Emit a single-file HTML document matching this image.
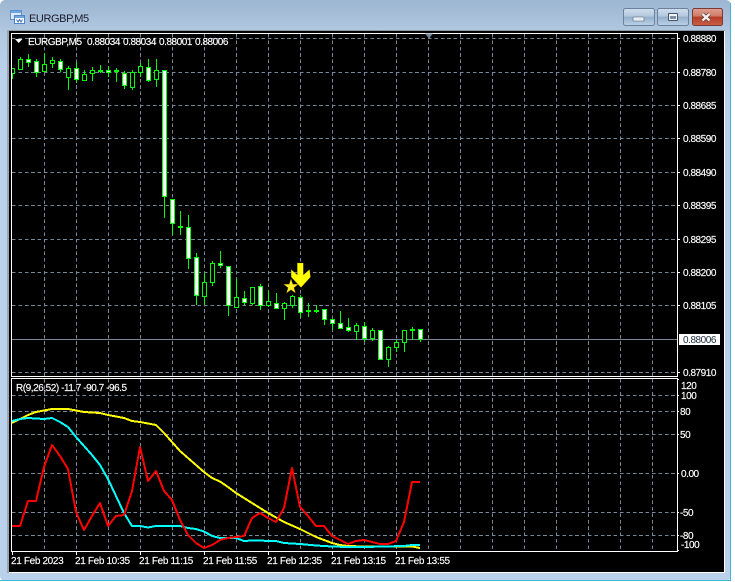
<!DOCTYPE html>
<html>
<head>
<meta charset="utf-8">
<title>EURGBP,M5</title>
<style>
html,body{margin:0;padding:0;background:#fff;width:735px;height:582px;overflow:hidden}
svg{display:block}
text{font-family:"Liberation Sans",sans-serif;font-size:10px;letter-spacing:-.45px;fill:#fff;stroke:#fff;stroke-width:.15px}
.t{letter-spacing:-.35px}
</style>
</head>
<body>
<svg width="735" height="582" viewBox="0 0 735 582" xmlns="http://www.w3.org/2000/svg">
<defs>
<linearGradient id="fr" x1="0" y1="0" x2="0" y2="1"><stop offset="0" stop-color="#9db6d1"/><stop offset=".06" stop-color="#b2c9e2"/><stop offset=".12" stop-color="#b9d1ea"/><stop offset="1" stop-color="#b9d1ea"/></linearGradient>
<linearGradient id="btn" x1="0" y1="0" x2="0" y2="1"><stop offset="0" stop-color="#d0deec"/><stop offset=".45" stop-color="#b3c8de"/><stop offset=".5" stop-color="#94afcb"/><stop offset="1" stop-color="#bcd2e8"/></linearGradient>
<linearGradient id="cls" x1="0" y1="0" x2="0" y2="1"><stop offset="0" stop-color="#e0a093"/><stop offset=".45" stop-color="#cf7a68"/><stop offset=".5" stop-color="#b63c25"/><stop offset="1" stop-color="#c9604a"/></linearGradient>
<clipPath id="mainc"><rect x="12" y="34" width="665" height="342"/></clipPath>
</defs>

<!-- window frame -->
<rect x="0" y="0" width="731" height="581" rx="5" fill="url(#fr)"/>
<rect x="0" y="580" width="731" height="1" fill="#3fb8d8"/>
<rect x="730" y="3" width="1" height="578" fill="#3fb8d8"/>

<!-- title icon -->
<g shape-rendering="crispEdges">
<rect x="10.500" y="10.500" width="11" height="9" fill="#dbe9f8" stroke="#5e93d0"/>
<rect x="11" y="11" width="10" height="2" fill="#6ea5e0"/>
<rect x="14.500" y="15.500" width="10" height="8" fill="#fff" stroke="#4d86c8"/>
<rect x="15" y="16" width="9" height="2" fill="#6ea5e0"/>
</g>
<path d="M16.500 19.500l1.500 2.500 1.500-2.500 1.500 2.500 1.500-2.500" fill="none" stroke="#3a6fb0" stroke-width="1"/>
<text x="29" y="22" style="font-size:11px;letter-spacing:-.4px;fill:#1c1c2e;stroke:none">EURGBP,M5</text>

<!-- window buttons -->
<rect x="623.500" y="8.500" width="31" height="17" rx="2" fill="url(#btn)" stroke="#6a829e"/>
<rect x="633" y="17" width="11" height="4" rx="1" fill="#e9eef4" stroke="#55677c" stroke-width=".6"/>
<rect x="657.500" y="8.500" width="31" height="17" rx="2" fill="url(#btn)" stroke="#6a829e"/>
<rect x="668" y="13" width="10" height="8" rx="1" fill="#44566c"/>
<rect x="669" y="14" width="8" height="6" fill="#f0f4f8"/>
<rect x="670" y="16" width="6" height="3" fill="#7d90a6"/>
<rect x="692.500" y="8.500" width="30" height="17" rx="2" fill="url(#cls)" stroke="#7a3a38"/>
<path d="M702.500 14l7 6.500M709.500 14l-7 6.500" stroke="#4a3a3a" stroke-width="3.600" fill="none"/>
<path d="M702.500 14l7 6.500M709.500 14l-7 6.500" stroke="#f4f0ee" stroke-width="2.400" fill="none"/>

<!-- client area -->
<rect x="7" y="30" width="718" height="543" fill="#fff"/>
<rect x="7" y="30" width="718" height="1" fill="#8f9aa6"/>
<rect x="7" y="30" width="2" height="543" fill="#9aa5b1"/>
<rect x="9" y="31" width="715" height="541" fill="#000"/>

<!-- grid -->
<g stroke="#778899" stroke-width="1" stroke-dasharray="3.600 2.800" fill="none" shape-rendering="crispEdges">
<path d="M12 38.500H677M12 72.500H677M12 105.500H677M12 138.500H677M12 172.500H677M12 205.500H677M12 239.500H677M12 272.500H677M12 305.500H677M12 372.500H677"/>
<path d="M12 395.500H677M12 411.500H677M12 434.500H677M12 473.500H677M12 512.500H677M12 535.500H677"/>
<path d="M44.500 34V376M76.500 34V376M108.500 34V376M140.500 34V376M172.500 34V376M204.500 34V376M236.500 34V376M268.500 34V376M300.500 34V376M332.500 34V376M364.500 34V376M396.500 34V376M428.500 34V376M460.500 34V376M492.500 34V376M524.500 34V376M556.500 34V376M588.500 34V376M620.500 34V376M652.500 34V376"/>
<path d="M44.500 379V551M76.500 379V551M108.500 379V551M140.500 379V551M172.500 379V551M204.500 379V551M236.500 379V551M268.500 379V551M300.500 379V551M332.500 379V551M364.500 379V551M396.500 379V551M428.500 379V551M460.500 379V551M492.500 379V551M524.500 379V551M556.500 379V551M588.500 379V551M620.500 379V551M652.500 379V551"/>
</g>
<!-- current price line -->
<path d="M12 339.500H677" stroke="#778899" stroke-width="1" shape-rendering="crispEdges"/>

<!-- candles -->
<g clip-path="url(#mainc)" shape-rendering="crispEdges">
<path stroke="#00ff00" stroke-width="1" fill="none" d="M12.500 68V79M20.500 57V70M28.500 54V67M36.500 59V77M44.500 53V72M52.500 57V68M60.500 59V72M68.500 66V90M76.500 62V83M84.500 70V80M92.500 67V81M100.500 65V73M108.500 66V77M116.500 68V82M124.500 71V89M132.500 70V90M140.500 63V77M148.500 59V82M156.500 59V87M164.500 70V218M172.500 199V235M180.500 211V235M188.500 215V269M196.500 253V305M204.500 273V305M212.500 261V286M220.500 251V268M228.500 266V316M236.500 279V307M244.500 291V305M252.500 287V305M260.500 284V310M268.500 291V307M276.500 293V309M284.500 302V320M292.500 295V308M300.500 295V318M308.500 303V317M316.500 305V313M324.500 309V325M332.500 319V330M340.500 311V328M348.500 318V332M356.500 323V340M364.500 322V342M372.500 328V341M380.500 330V360M388.500 346V367M396.500 340V352M404.500 330V352M412.500 327V340M420.500 329V342"/>
<path stroke="#00ff00" stroke-width="1" fill="#000" d="M10.500 68.500h4v5h-4zM18.500 59.500h4v10h-4zM42.500 64.500h4v7h-4zM50.500 60.500h4v3h-4zM66.500 68.500h4v9h-4zM82.500 74.500h4v6h-4zM90.500 70.500h4v3h-4zM130.500 72.500h4v15h-4zM138.500 66.500h4v6h-4zM154.500 70.500h4v9h-4zM202.500 282.500h4v14h-4zM210.500 263.500h4v19h-4zM234.500 297.500h4v10h-4zM250.500 287.500h4v16h-4zM266.500 301.500h4v4h-4zM282.500 303.500h4v5h-4zM290.500 296.500h4v9h-4zM354.500 325.500h4v6h-4zM370.500 330.500h4v8h-4zM386.500 347.500h4v12h-4zM394.500 342.500h4v5h-4zM402.500 330.500h4v12h-4z"/>
<path stroke="#00ff00" stroke-width="1" fill="#fff" d="M26.500 59.500h4v3h-4zM34.500 61.500h4v11h-4zM58.500 61.500h4v8h-4zM74.500 68.500h4v11h-4zM98.500 70.500h4v1h-4zM106.500 70.500h4v2h-4zM114.500 70.500h4v1h-4zM122.500 73.500h4v12h-4zM146.500 67.500h4v13h-4zM162.500 70.500h4v126h-4zM170.500 199.500h4v24h-4zM178.500 226.500h4v1h-4zM186.500 227.500h4v31h-4zM194.500 257.500h4v38h-4zM218.500 263.500h4v2h-4zM226.500 266.500h4v39h-4zM242.500 298.500h4v4h-4zM258.500 286.500h4v19h-4zM274.500 303.500h4v5h-4zM298.500 297.500h4v15h-4zM306.500 310.500h4v1h-4zM314.500 310.500h4v1h-4zM322.500 309.500h4v10h-4zM330.500 319.500h4v4h-4zM338.500 323.500h4v5h-4zM346.500 327.500h4v3h-4zM362.500 326.500h4v12h-4zM378.500 330.500h4v29h-4zM410.500 329.500h4v1h-4zM418.500 329.500h4v10h-4z"/>
</g>

<!-- arrow and star -->
<path d="M297.300 263H303.300V275L309.500 269.500L310.500 277L301 287.500L291.200 277L291.200 269.500L297.300 275Z" fill="#ffff00" stroke="#a86a00" stroke-width=".25"/>
<path d="M291 279L292.800 284.300L298.200 284.300L293.900 287.700L295.500 293L291 289.800L286.500 293L288.100 287.700L283.800 284.300L289.200 284.300Z" fill="#ffee22" stroke="#a87000" stroke-width=".25"/>

<!-- frames -->
<g stroke="#fff" stroke-width="1" fill="none" shape-rendering="crispEdges">
<path d="M11.500 33.500H677.500V376.500H11.500Z"/>
<path d="M11.500 378.500H677.500V551.500H11.500Z"/>
<path d="M677 38.500h3M677 72.500h3M677 105.500h3M677 138.500h3M677 172.500h3M677 205.500h3M677 239.500h3M677 272.500h3M677 305.500h3M677 372.500h3"/>
<path d="M677 379.500h2M677 395.500h2M677 411.500h2M677 434.500h2M677 473.500h2M677 512.500h2M677 535.500h2M677 550.500h2"/>
<path d="M12.500 552v3M76.500 552v3M140.500 552v3M204.500 552v3M268.500 552v3M332.500 552v3M396.500 552v3"/>
</g>
<!-- shift marker -->
<path d="M425 33.500H433L429 38.500Z" fill="#778899"/>
<!-- header triangle -->
<path d="M15 39H22.500L18.700 43Z" fill="#fff"/>

<!-- indicator lines -->
<g fill="none" stroke-width="2" stroke-linejoin="round" shape-rendering="crispEdges">
<polyline stroke="#ffff00" points="12,423 20,419 28,415 36,412 44,410.500 52,409 60,409 68,409 76,410.500 84,412 92,412.500 100,413 108,415 116,416.500 124,418 132,421 140,422 148,423.500 156,425 164,433 172,442 180,451 188,458 196,465 204,472 212,478 220,481.500 228,487 236,493 244,498 252,503 260,508 268,513 276,517.500 284,522 292,525.500 300,529 308,533 316,537 324,540 332,543 340,545 348,546 364,546.500 412,546.500 420,548"/>
<polyline stroke="#00ffff" points="12,421 20,419 28,418 36,418.500 44,419 52,418 60,422 68,427 76,437 84,446 92,455 100,465 108,479 116,496 124,513 132,526 140,526 148,527.500 156,526 172,526 180,526 188,528 196,529 204,531.500 212,536 220,538 236,538 244,541 252,540.500 276,541 284,543 300,544 316,545.500 332,546.500 348,547 364,547 404,546 412,545 420,545"/>
<polyline stroke="#ff0000" points="12,526 20,526 28,501 36,501 44,467 52,445 60,456 68,469 76,512 84,530 92,516 100,503 108,526 116,516 124,515 132,491 140,447 148,481 156,471 164,491 172,500 180,520 188,535 196,543 204,548 212,545 220,540 228,538 236,537 244,536 252,518 260,513 268,518 276,522 284,508 292,468 300,507 308,516 316,526 324,526 332,536 340,540 348,544 356,541 364,540 372,542 380,544 388,544 396,541 404,522 412,482 420,482"/>
</g>

<!-- header texts -->
<text x="28" y="45">EURGBP,M5</text>
<text x="87" y="45">0.88034</text>
<text x="123" y="45">0.88034</text>
<text x="159" y="45">0.88001</text>
<text x="195" y="45">0.88006</text>
<text x="16" y="391">R(9,26,52) -11.7 -90.7 -96.5</text>

<!-- price axis -->
<text x="683" y="42">0.88880</text>
<text x="683" y="76">0.88780</text>
<text x="683" y="109">0.88685</text>
<text x="683" y="142">0.88590</text>
<text x="683" y="176">0.88490</text>
<text x="683" y="209">0.88395</text>
<text x="683" y="243">0.88295</text>
<text x="683" y="276">0.88200</text>
<text x="683" y="309">0.88105</text>
<rect x="679" y="334" width="41" height="11" fill="#fff"/>
<text x="683" y="343" style="fill:#1a2a3a;stroke:none">0.88006</text>
<text x="683" y="376">0.87910</text>

<!-- indicator axis -->
<text x="681" y="389">120</text>
<text x="681" y="399">100</text>
<text x="680" y="415">80</text>
<text x="680" y="438">50</text>
<text x="681" y="477">0.00</text>
<text x="680" y="516">-50</text>
<text x="680" y="539">-80</text>
<text x="681" y="548">-100</text>

<!-- time axis -->
<text class="t" x="11" y="564">21 Feb 2023</text>
<text class="t" x="75" y="564">21 Feb 10:35</text>
<text class="t" x="139" y="564">21 Feb 11:15</text>
<text class="t" x="203" y="564">21 Feb 11:55</text>
<text class="t" x="267" y="564">21 Feb 12:35</text>
<text class="t" x="331" y="564">21 Feb 13:15</text>
<text class="t" x="395" y="564">21 Feb 13:55</text>
</svg>
</body>
</html>
